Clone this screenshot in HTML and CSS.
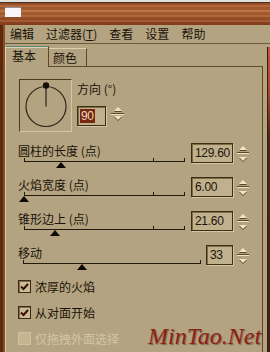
FILE: index.html
```html
<!DOCTYPE html>
<html lang="zh-CN">

<head>
    <meta charset="UTF-8">
    <meta name="viewport" content="width=device-width, initial-scale=1.0">
    <title>火焰 - 基本</title>
    <link rel="stylesheet" href="styles.css">
</head>

<body>
    <div class="window">
        <div class="titlebar"><span class="app-icon"></span></div>

        <div class="frame">
            <ul class="menubar">
                <li>编辑</li>
                <li>过滤器(<u>T</u>)</li>
                <li>查看</li>
                <li>设置</li>
                <li>帮助</li>
            </ul>

            <div class="workspace">
                <div class="tab-control">
                    <div class="tabs">
                        <span class="tab tab-active">基本</span>
                        <span class="tab">颜色</span>
                    </div>

                    <div class="panel">
                        <!-- direction dial -->
                        <div class="direction">
                            <div class="dial">
                                <svg width="51" height="51" viewBox="0 0 51 51">
                                    <circle cx="26" cy="26.5" r="20" fill="none" stroke="#2e261a" stroke-width="1.2" />
                                    <line x1="26" y1="6" x2="26" y2="26.5" stroke="#4a4236" stroke-width="1.6" />
                                    <circle cx="26" cy="5.5" r="3.2" fill="#14100a" />
                                </svg>
                            </div>
                            <div class="direction-controls">
                                <span class="label">方向 (°)</span>
                                <div class="direction-value">
                                    <span class="field field-angle"><span class="selection">90</span></span>
                                    <span class="spin spin-square"><span class="spin-up"></span><span class="spin-down"></span></span>
                                </div>
                            </div>
                        </div>

                        <!-- sliders -->
                        <div class="param">
                            <div class="param-track">
                                <span class="label">圆柱的长度 (点)</span>
                                <div class="slider slider-marked"><span class="thumb" style="left: 37px"></span></div>
                            </div>
                            <div class="param-value">
                                <span class="field">129.60</span>
                                <span class="spin"><span class="spin-up"></span><span class="spin-down"></span></span>
                            </div>
                        </div>

                        <div class="param">
                            <div class="param-track">
                                <span class="label">火焰宽度 (点)</span>
                                <div class="slider slider-marked"><span class="thumb" style="left: 0px"></span></div>
                            </div>
                            <div class="param-value">
                                <span class="field">6.00</span>
                                <span class="spin"><span class="spin-up"></span><span class="spin-down"></span></span>
                            </div>
                        </div>

                        <div class="param">
                            <div class="param-track">
                                <span class="label">锥形边上 (点)</span>
                                <div class="slider slider-marked"><span class="thumb" style="left: 31px"></span></div>
                            </div>
                            <div class="param-value">
                                <span class="field">21.60</span>
                                <span class="spin"><span class="spin-up"></span><span class="spin-down"></span></span>
                            </div>
                        </div>

                        <div class="param param-short">
                            <div class="param-track">
                                <span class="label">移动</span>
                                <div class="slider"><span class="thumb" style="left: 59px"></span></div>
                            </div>
                            <div class="param-value">
                                <span class="field">33</span>
                                <span class="spin"><span class="spin-up"></span><span class="spin-down"></span></span>
                            </div>
                        </div>

                        <!-- options -->
                        <label class="check">
                            <span class="checkbox">
                                <svg width="11" height="11" viewBox="0 0 11 11"><polyline points="2,5.5 4.5,8 9,3" fill="none" stroke="#3a0e08" stroke-width="2" /></svg>
                            </span>
                            浓厚的火焰
                        </label>
                        <label class="check">
                            <span class="checkbox">
                                <svg width="11" height="11" viewBox="0 0 11 11"><polyline points="2,5.5 4.5,8 9,3" fill="none" stroke="#3a0e08" stroke-width="2" /></svg>
                            </span>
                            从对面开始
                        </label>
                        <label class="check check-disabled">
                            <span class="checkbox"></span>
                            仅拖拽外面选择
                        </label>
                    </div>
                </div>
                <div class="frame-edge"></div>
            </div>
        </div>

        <div class="watermark">MinTao.Net</div>
    </div>
</body>

</html>
```

FILE: styles.css
```css
/* skinned filter dialog, wood frame + tan panels */

* {
    box-sizing: border-box;
}

body {
    margin: 0;
    width: 270px;
    height: 352px;
    overflow: hidden;
    background: #b4a380;
    font-family: "Noto Sans CJK SC", "Noto Sans", sans-serif;
    font-size: 12px;
    color: #1a1309;
}

.window {
    position: relative;
    display: flex;
    flex-direction: column;
    height: 352px;
}

/* title bar */

.titlebar {
    flex: none;
    height: 25px;
    padding: 7px 0 0 5px;
    background: linear-gradient(to bottom, #e2e0da 0, #e2e0da 2px, #4a3020 2px, #4a3020 3px, transparent 3px),
        repeating-linear-gradient(to bottom, rgba(255, 190, 130, 0.12) 0 2px, rgba(70, 25, 0, 0.12) 2px 5px),
        linear-gradient(to bottom, #9a4a24, #b46a3a 45%, #8a4020);
}

.app-icon {
    display: block;
    width: 16px;
    height: 10px;
    background: #f6f6fa;
    border-top: 1px solid #8c92aa;
}

/* frame */

.frame {
    flex: 1;
    display: flex;
    flex-direction: column;
    border-left: 3px solid #5a2a0c;
    padding-left: 2px;
    background: linear-gradient(#8e4a22, #8e4a22) left / 2px 100% no-repeat, #b4a380;
}

.menubar {
    display: flex;
    gap: 12px;
    height: 18px;
    margin: 0;
    padding: 0 0 0 5px;
    list-style: none;
    line-height: 18px;
}

.workspace {
    flex: 1;
    display: flex;
    border-top: 1px solid #6c5a3a;
}

.tab-control {
    flex: 1;
    display: flex;
    flex-direction: column;
    margin-right: 4px;
}

.frame-edge {
    width: 3px;
    margin-top: 3px;
    border-left: 1px solid #3a1e0c;
    background: linear-gradient(to bottom, #c0583a 0, #a4442a 50px, #4a2614 90px, #3c2414);
}

/* tabs */

.tabs {
    display: flex;
    align-items: flex-end;
    height: 22px;
}

.tab {
    height: 18px;
    padding: 0 9px 0 4px;
    line-height: 17px;
    border-top: 1px solid #ddd0ae;
    border-right: 1px solid #5a482a;
}

.tab-active {
    position: relative;
    z-index: 1;
    height: 21px;
    margin-bottom: -1px;
    padding: 1px 12px 0 6px;
    line-height: 15px;
    border-top: 1px solid #4f8a78;
    border-left: 1px solid #ddd0ae;
    box-shadow: inset 0 1px 0 #ddd0ae;
    background: #b4a380;
}

.panel {
    flex: 1;
    border-top: 1px solid #5e4c2e;
    border-left: 1px solid #d6c8a6;
    border-right: 1px solid #5a482a;
}

.label {
    line-height: 14px;
    white-space: nowrap;
}

/* direction */

.direction {
    display: flex;
    align-items: flex-start;
    margin: 12px 0 0 13px;
}

.dial {
    width: 53px;
    height: 53px;
    border: 1px solid;
    border-color: #4a3a20 #d4c6a2 #d4c6a2 #4a3a20;
}

.dial svg {
    display: block;
}

.direction-controls {
    display: flex;
    flex-direction: column;
    margin-left: 5px;
}

.direction-controls .label {
    margin-top: 3px;
}

.direction-value {
    display: flex;
    align-items: flex-start;
    gap: 3px;
    margin-top: 9px;
}

/* value boxes */

.field {
    display: flex;
    align-items: center;
    width: 42px;
    height: 20px;
    padding-left: 3px;
    border: 1px solid #3e2e16;
    box-shadow: inset 1px 1px 0 #7c6a48, 1px 1px 0 #d4c6a2;
    background: #c1b08c;
    font-family: "Liberation Sans", Arial, sans-serif;
    font-size: 12px;
    letter-spacing: -0.3px;
    line-height: 18px;
    color: #1a140a;
}

.field-angle {
    width: 29px;
    margin-top: 1px;
    padding-left: 2px;
}

.selection {
    height: 14px;
    padding: 0 1px;
    line-height: 14px;
    background: #76290f;
    color: #ead8bc;
}

.spin {
    display: flex;
    flex-direction: column;
    width: 16px;
    height: 20px;
}

.spin-square {
    width: 17px;
    height: 17px;
}

.spin-up,
.spin-down {
    flex: 1;
    display: flex;
    align-items: center;
    justify-content: center;
    margin: 0 2px;
}

.spin-up {
    border-bottom: 1px solid #5b4727;
}

.spin-down {
    border-top: 1px solid #efe4c6;
}

.spin-up::after,
.spin-down::after {
    content: "";
    width: 0;
    height: 0;
    border-left: 4px solid transparent;
    border-right: 4px solid transparent;
    filter: drop-shadow(0 1px 0 #5b4727);
}

.spin-up::after {
    border-bottom: 4px solid #efe4c6;
}

.spin-down::after {
    border-top: 4px solid #efe4c6;
}

/* sliders */

.param {
    display: flex;
    gap: 6px;
    height: 34px;
    padding: 0 11px 0 12px;
}

.direction + .param {
    margin-top: 11px;
}

.param-track {
    flex: 1;
    display: flex;
    flex-direction: column;
}

.param-track .label {
    margin-top: 1px;
}

.param-value {
    display: flex;
    align-items: flex-start;
    gap: 2px;
}

.slider {
    position: relative;
    height: 10px;
    margin-left: 6px;
    background: linear-gradient(#221a0c, #221a0c) 0 0 / 1px 4px no-repeat,
        linear-gradient(#221a0c, #221a0c) 100% 0 / 1px 4px no-repeat,
        linear-gradient(#221a0c, #221a0c) 0 3px / 100% 1px no-repeat;
}

.slider-marked {
    background: linear-gradient(#221a0c, #221a0c) 0 0 / 1px 4px no-repeat,
        linear-gradient(#221a0c, #221a0c) 129px 0 / 1px 4px no-repeat,
        linear-gradient(#221a0c, #221a0c) 100% 0 / 1px 4px no-repeat,
        linear-gradient(#221a0c, #221a0c) 0 3px / 100% 1px no-repeat;
}

.thumb {
    position: absolute;
    top: 4px;
    width: 0;
    height: 0;
    margin-left: -5px;
    border-left: 5.5px solid transparent;
    border-right: 5.5px solid transparent;
    border-bottom: 6px solid #0c0906;
}

.param-short {
    gap: 5px;
}

.param-short .slider {
    margin-left: 5px;
}

.param-short .field {
    width: 27px;
}

/* check boxes */

.check {
    display: flex;
    align-items: center;
    gap: 4px;
    height: 13px;
    margin: 0 0 13px 12px;
    white-space: nowrap;
}

.param + .check {
    margin-top: 1px;
}

.checkbox {
    display: flex;
    align-items: center;
    justify-content: center;
    width: 13px;
    height: 13px;
    border: 1px solid #3c2a14;
    box-shadow: inset 1px 1px 0 #7e6c4c;
    background: #cbbb96;
}

.check-disabled {
    color: #d3c6a5;
}

.check-disabled .checkbox {
    border-color: #cfc1a0;
    box-shadow: none;
    background: #c5b691;
}

/* site watermark over the corner */

.watermark {
    position: absolute;
    left: 148px;
    top: 322px;
    font-family: "Liberation Serif", serif;
    font-style: italic;
    font-size: 24px;
    line-height: 28px;
    color: #8e1f17;
    text-shadow: 1px 1px 1px rgba(60, 40, 30, 0.5);
}
```
